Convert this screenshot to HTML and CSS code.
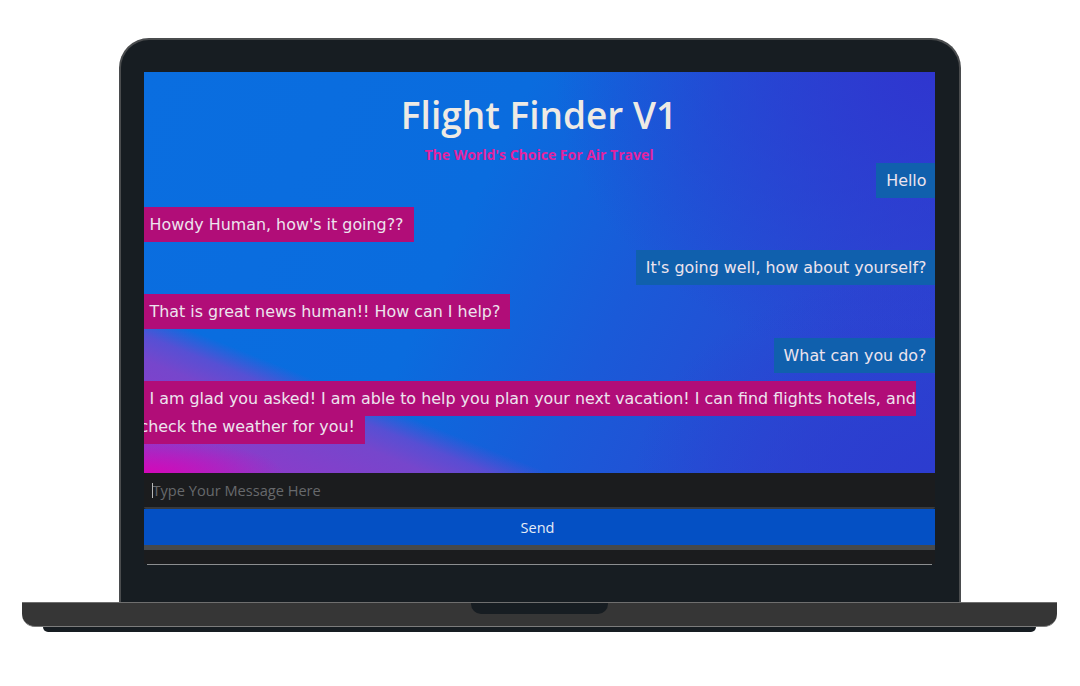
FILE: index.html
```html
<!DOCTYPE html>
<html lang="en">
<head>
<meta charset="utf-8">
<title>Flight Finder V1</title>
<link rel="stylesheet" href="styles.css">
</head>
<body>
<div class="laptop">
  <div class="lid">
    <div class="screen">
      <div class="chat">
        <h1 class="title">Flight Finder V1</h1>
        <p class="tagline">The World's Choice For Air Travel</p>
        <div class="messages">
          <div class="msg user"><span class="bubble">Hello</span></div>
          <div class="msg bot"><span class="bubble">Howdy Human, how's it going??</span></div>
          <div class="msg user"><span class="bubble">It's going well, how about yourself?</span></div>
          <div class="msg bot"><span class="bubble">That is great news human!! How can I help?</span></div>
          <div class="msg user"><span class="bubble">What can you do?</span></div>
          <div class="msg bot"><span class="bubble">I am glad you asked! I am able to help you plan your next vacation! I can find flights hotels, and check the weather for you!</span></div>
        </div>
      </div>
      <label class="field"><input class="input" type="text" placeholder="Type Your Message Here"></label>
      <button class="send" type="button">Send</button>
      <div class="bar"></div>
      <div class="tray"></div>
      <div class="rule"></div>
    </div>
  </div>
  <div class="base"><div class="notch"></div></div>
  <div class="foot"></div>
</div>
</body>
</html>
```

FILE: styles.css
```css
html, body {
  margin: 0;
  padding: 0;
  background: #ffffff;
}

.laptop {
  width: 1080px;
  height: 686px;
  box-sizing: border-box;
  padding: 38px 1px 0 0;
  display: flex;
  flex-direction: column;
  align-items: center;
}

.lid {
  width: 842px;
  height: 564px;
  box-sizing: border-box;
  border: 2px solid #4a4c4e;
  border-bottom: none;
  border-radius: 30px 30px 0 0;
  background: #171d22;
  padding: 32px 24px 0 23px;
}

.screen {
  width: 791px;
  display: flex;
  flex-direction: column;
}

.chat {
  height: 401px;
  overflow: hidden;
  padding-top: 20px;
  box-sizing: border-box;
  background:
    radial-gradient(ellipse 140px 34px at 0% 100%, rgba(214, 6, 184, 0.95) 0%, rgba(214, 6, 184, 0) 100%),
    linear-gradient(21.7deg, #a02ec6 0px, #8a3cca 45px, #7646cc 105px, rgba(112, 70, 208, 0.75) 128px, rgba(90, 80, 215, 0) 150px),
    radial-gradient(ellipse 380px 300px at 100% 0%, #2f36cf 0%, rgba(47, 54, 207, 0) 100%),
    radial-gradient(ellipse 300px 200px at 100% 100%, #2c3ccf 0%, rgba(44, 60, 207, 0) 100%),
    linear-gradient(115deg, #0a6ee0 0%, #0a6cde 40%, #1a5ad8 60%, #2a48d2 85%, #2c42d0 100%);
}

.title {
  margin: 0;
  font-family: "Open Sans", "Noto Sans", sans-serif;
  font-weight: 600;
  font-size: 37px;
  line-height: 44px;
  color: #eeeae4;
  text-align: center;
  transform: translateY(1px);
}

.tagline {
  margin: 8.6px 0 0;
  font-family: "Open Sans", "Noto Sans", sans-serif;
  font-weight: 700;
  font-size: 14px;
  line-height: 20px;
  color: #e3239f;
  text-align: center;
}

.messages {
  margin: 2.7px -2px 0 -4px;
  font-family: "DejaVu Sans", "Liberation Sans", sans-serif;
  font-size: 15.9px;
  color: #ede4ee;
}

.msg {
  line-height: 28px;
  margin-bottom: 15.6px;
}

.msg.user {
  text-align: right;
}

.msg.bot {
  text-align: left;
}

.bubble {
  padding: 8px 10px;
}

.user .bubble {
  background: #1060ad;
}

.bot .bubble {
  background: #b10d78;
}

.field {
  position: relative;
  display: block;
  height: 34px;
  background: #1b1c1e;
  border-bottom: 2px solid #38393c;
  border-radius: 0 0 2px 2px;
}

.field::before {
  content: "";
  position: absolute;
  left: 8px;
  top: 10px;
  width: 1px;
  height: 15px;
  background: #b8b8b8;
}

.input {
  width: 100%;
  height: 34px;
  box-sizing: border-box;
  border: none;
  outline: none;
  background: transparent;
  padding: 0 0 0 9px;
  font-family: "Open Sans", "Noto Sans", sans-serif;
  font-size: 14.6px;
  color: #d0d0d0;
}

.input::placeholder {
  color: #67696c;
}

.send {
  display: block;
  width: 100%;
  height: 36px;
  border: none;
  padding: 0 3px 0 0;
  background: #0450c4;
  color: #e6ecf6;
  font-family: "Open Sans", "Noto Sans", sans-serif;
  font-size: 14.5px;
}

.bar {
  height: 5px;
  background: #46494c;
}

.tray {
  height: 14px;
  background: #1b1c1e;
}

.rule {
  height: 1px;
  margin: 0 3px;
  background: #8c8e90;
}

.base {
  width: 1035px;
  height: 25px;
  box-sizing: border-box;
  background: #363636;
  border-top: 1px solid #6f6f6f;
  border-bottom: 1px solid #7c7c7c;
  border-radius: 0 0 13px 13px;
  display: flex;
  justify-content: center;
  align-items: flex-start;
}

.notch {
  width: 137px;
  height: 11px;
  background: #171d22;
  border-radius: 0 0 10px 10px;
}

.foot {
  width: 993px;
  height: 5px;
  background: #171d22;
  border-radius: 0 0 8px 8px;
}
```
